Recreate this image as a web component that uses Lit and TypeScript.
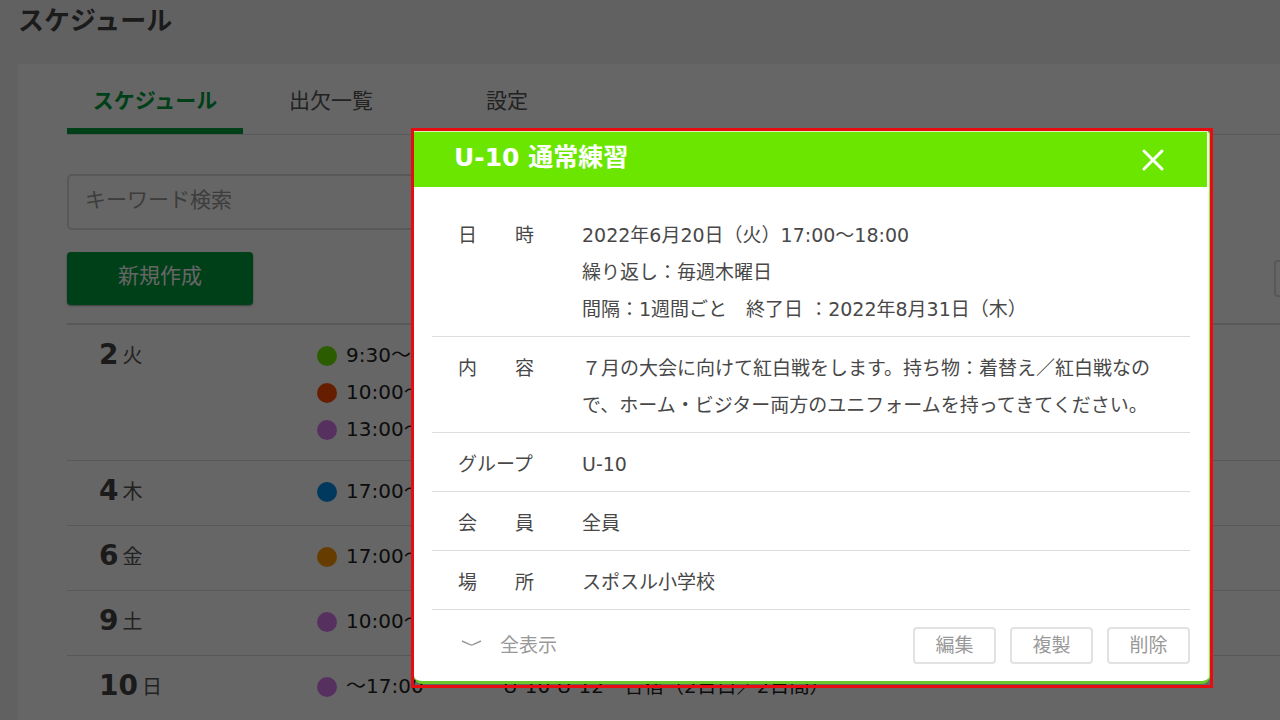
import { LitElement, html, css } from "lit";
import { customElement, state } from "lit/decorators.js";

interface ScheduleEvent {
  color: string;
  time: string;
  title: string;
}

interface Day {
  date: number;
  weekday: string;
  events: ScheduleEvent[];
}

const DAYS: Day[] = [
  {
    date: 2,
    weekday: "火",
    events: [
      { color: "green", time: "9:30～", title: "" },
      { color: "red", time: "10:00～", title: "" },
      { color: "purple", time: "13:00～", title: "" },
    ],
  },
  { date: 4, weekday: "木", events: [{ color: "blue", time: "17:00～", title: "" }] },
  { date: 6, weekday: "金", events: [{ color: "orange", time: "17:00～", title: "" }] },
  { date: 9, weekday: "土", events: [{ color: "purple", time: "10:00～", title: "" }] },
  {
    date: 10,
    weekday: "日",
    events: [{ color: "purple", time: "～17:00", title: "U-10 U-12　合宿（2日目／2日間）" }],
  },
];

const DETAILS: { label: string; lines: string[] }[] = [
  {
    label: "日　　時",
    lines: [
      "2022年6月20日（火）17:00～18:00",
      "繰り返し：毎週木曜日",
      "間隔：1週間ごと　終了日 ：2022年8月31日（木）",
    ],
  },
  {
    label: "内　　容",
    lines: [
      "７月の大会に向けて紅白戦をします。持ち物：着替え／紅白戦なので、ホーム・ビジター両方のユニフォームを持ってきてください。",
    ],
  },
  { label: "グループ", lines: ["U-10"] },
  { label: "会　　員", lines: ["全員"] },
  { label: "場　　所", lines: ["スポスル小学校"] },
];

@customElement("schedule-list")
class ScheduleList extends LitElement {
  static styles = css`
    :host {
      display: block;
    }
    .list {
      margin: 0;
      padding: 0;
      list-style: none;
      border-top: 2px solid #dcdcdc;
    }
    .day {
      display: grid;
      grid-template-columns: 218px 1fr;
      padding: 12px 0 12px 32px;
      border-bottom: 1px solid #dcdcdc;
    }
    .date {
      box-sizing: border-box;
      display: flex;
      align-items: center;
      gap: 4px;
      height: 40px;
      padding-bottom: 5px;
      color: #555;
      font-size: 20px;
    }
    .number {
      font-size: 28px;
      color: #444;
    }
    .events {
      margin: 0;
      padding: 0;
      list-style: none;
    }
    .event {
      display: grid;
      grid-template-columns: 20px 148px 1fr;
      align-items: center;
      column-gap: 9px;
      line-height: 37px;
      font-size: 20px;
      color: #222;
    }
    .dot {
      width: 20px;
      height: 20px;
      border-radius: 50%;
    }
    .green {
      background: #6be600;
    }
    .red {
      background: #ff4b00;
    }
    .purple {
      background: #d87af0;
    }
    .blue {
      background: #008ee8;
    }
    .orange {
      background: #ff9600;
    }
  `;

  render() {
    return html`
      <ul class="list">
        ${DAYS.map(
          (day) => html`
            <li class="day">
              <div class="date"><strong class="number">${day.date}</strong><span>${day.weekday}</span></div>
              <ul class="events">
                ${day.events.map(
                  (event) => html`
                    <li class="event">
                      <span class="dot ${event.color}"></span>
                      <span>${event.time}</span>
                      <span>${event.title}</span>
                    </li>
                  `
                )}
              </ul>
            </li>
          `
        )}
      </ul>
    `;
  }
}

@customElement("event-dialog")
class EventDialog extends LitElement {
  static styles = css`
    :host {
      display: block;
    }
    .frame {
      border: 3px solid #e60c10;
      padding-bottom: 1px;
    }
    .dialog {
      background: #fff;
      border-top: 1px solid #d8f5b8;
      border-right: 1px solid #8cf03c;
      border-bottom: 3px solid #6cc828;
      border-radius: 0 4px 8px 8px;
      color: #484848;
      font-size: 19px;
    }
    .header {
      display: flex;
      align-items: center;
      justify-content: space-between;
      margin-right: 2px;
      padding: 0 42px 0 40px;
      height: 55px;
      background: #6be600;
      color: #fff;
    }
    .title {
      margin: 0;
      font-size: 25px;
      line-height: 50px;
      padding-bottom: 4px;
    }
    .close {
      display: flex;
      padding: 0;
      border: 0;
      background: none;
      color: inherit;
    }
    .body {
      padding: 17px 19px 17px 18px;
    }
    .details {
      width: 100%;
      border-collapse: separate;
      border-spacing: 0;
      line-height: 37px;
    }
    .label,
    .value {
      padding: 13px 0 8px;
      border-bottom: 1px solid #ddd;
      font-weight: 400;
      text-align: left;
      vertical-align: top;
    }
    .label {
      width: 124px;
      padding-left: 26px;
    }
    .value {
      padding-right: 30px;
    }
    .footer {
      display: flex;
      align-items: center;
      justify-content: space-between;
      padding: 17px 0 0 29px;
    }
    .actions {
      display: flex;
      gap: 14px;
    }
    .expand,
    .action {
      font: inherit;
      color: #999;
      background: none;
    }
    .expand {
      display: flex;
      align-items: center;
      gap: 18px;
      padding: 0 0 5px;
      border: 0;
    }
    .action {
      width: 83px;
      height: 37px;
      padding: 0 0 5px;
      border: 2px solid #e2e2e2;
      border-radius: 4px;
    }
  `;

  render() {
    return html`
      <div class="frame">
        <section class="dialog" role="dialog" aria-labelledby="title">
          <header class="header">
            <h2 class="title" id="title">U-10 通常練習</h2>
            <button class="close" aria-label="閉じる">
              <svg width="24" height="24" viewBox="0 0 24 24" fill="none" stroke="currentColor" stroke-width="3" stroke-linecap="round">
                <path d="M3 3L21 21M21 3L3 21" />
              </svg>
            </button>
          </header>
          <div class="body">
            <table class="details">
              ${DETAILS.map(
                (row) => html`
                  <tr>
                    <th class="label" scope="row">${row.label}</th>
                    <td class="value">${row.lines.map((line) => html`<div>${line}</div>`)}</td>
                  </tr>
                `
              )}
            </table>
            <footer class="footer">
              <button class="expand">
                <svg width="21" height="10" viewBox="0 0 21 10" fill="none" stroke="currentColor" stroke-width="1.5">
                  <path d="M1 3L9 6.600Q10.500 7.200 12 6.600L20 3" />
                </svg>
                <span>全表示</span>
              </button>
              <div class="actions">
                <button class="action">編集</button>
                <button class="action">複製</button>
                <button class="action">削除</button>
              </div>
            </footer>
          </div>
        </section>
      </div>
    `;
  }
}

@customElement("app-root")
class AppRoot extends LitElement {
  static styles = css`
    :host {
      display: block;
      height: 100vh;
      overflow: hidden;
      background: #f3f3f3;
      color: #444;
      font-family: "DejaVu Sans", "Noto Sans CJK JP", sans-serif;
    }
    .heading {
      margin: 0;
      padding: 0 18px;
      height: 64px;
      font-size: 26px;
      line-height: 42px;
    }
    .panel {
      margin-left: 18px;
      padding-left: 49px;
      background: #fff;
    }
    .tabs {
      display: flex;
      border-bottom: 1px solid #dcdcdc;
    }
    .tab {
      box-sizing: border-box;
      width: 176px;
      height: 70px;
      border-bottom: 6px solid transparent;
      color: #555;
      font-size: 21px;
      line-height: 74px;
      text-align: center;
      text-decoration: none;
    }
    .current {
      border-color: #00a040;
      color: #00a040;
      font-weight: 700;
    }
    .search {
      box-sizing: border-box;
      display: block;
      width: 50%;
      height: 56px;
      margin: 39px 0 22px;
      padding: 0 16px 4px;
      border: 2px solid #dcdcdc;
      border-radius: 5px;
      background: #fff;
      color: #444;
      font: inherit;
      font-size: 21px;
    }
    .search::placeholder {
      color: #999;
      opacity: 1;
    }
    .toolbar {
      display: flex;
      align-items: center;
      justify-content: space-between;
      margin-bottom: 18px;
    }
    .create {
      width: 186px;
      height: 53px;
      padding: 0 0 9px;
      border: 0;
      border-radius: 4px;
      background: #00a040;
      box-shadow: 0 1px 2px rgba(0, 0, 0, 0.4);
      color: #fff;
      font: inherit;
      font-size: 21px;
    }
    .more {
      width: 100px;
      height: 37px;
      margin-right: -94px;
      border: 2px solid #dcdcdc;
      border-radius: 4px;
      background: #fff;
    }
    .overlay {
      position: fixed;
      inset: 0;
      padding: 128px 67px 0 411px;
      background: rgba(0, 0, 0, 0.6);
    }
  `;

  @state() private open = true;

  render() {
    return html`
      <h1 class="heading">スケジュール</h1>
      <main class="panel">
        <nav class="tabs">
          <a class="tab current" href="#schedule">スケジュール</a>
          <a class="tab" href="#attendance">出欠一覧</a>
          <a class="tab" href="#settings">設定</a>
        </nav>
        <input class="search" type="search" placeholder="キーワード検索" aria-label="キーワード検索" />
        <div class="toolbar">
          <button class="create">新規作成</button>
          <button class="more" aria-label="メニュー"></button>
        </div>
        <schedule-list></schedule-list>
      </main>
      ${this.open ? html`<div class="overlay"><event-dialog></event-dialog></div>` : null}
    `;
  }
}
